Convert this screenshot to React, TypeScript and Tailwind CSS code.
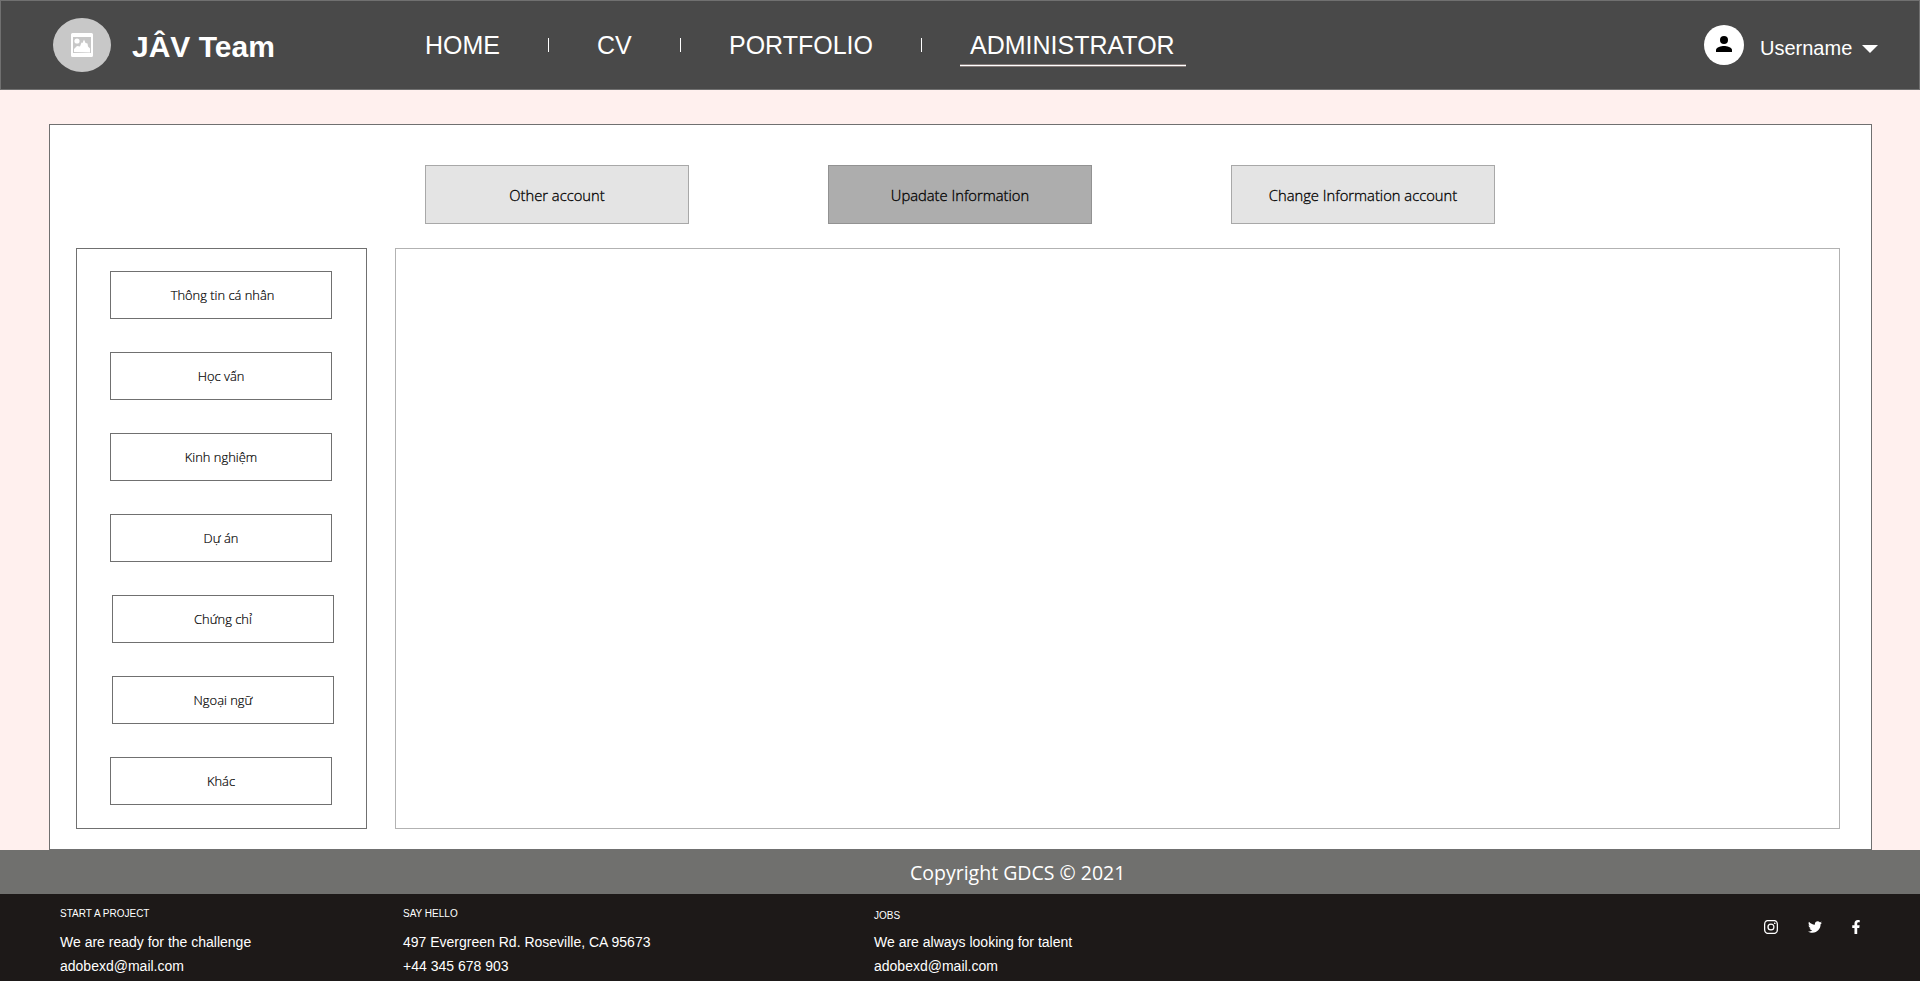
import React from "react";
import { BsInstagram } from "react-icons/bs";
import { FaTwitter, FaFacebookF } from "react-icons/fa";

const arial = "font-['Liberation_Sans',Arial,sans-serif]";
const segoe = "font-['Open_Sans','Noto_Sans',sans-serif]";

const sections = ["Thông tin cá nhân", "Học vấn", "Kinh nghiệm", "Dự án", "Chứng chỉ", "Ngoại ngữ", "Khác"];

export default function App() {
  return (
    <div className={`flex h-[981px] w-[1920px] flex-col overflow-hidden bg-[#fff0ee] ${arial}`}>
      <header className="flex h-[90px] shrink-0 items-start border border-[#707070] bg-[#494949] text-white">
        <div className="ml-[52px] mt-[17px] flex h-[54px] w-[58px] items-center justify-center rounded-[50%] bg-[#c8c8c8]">
          <svg viewBox="0 0 22 24" className="h-6 w-[22px]">
            <path fillRule="evenodd" fill="#fff" d="M1.500 0h19a1.500 1.500 0 0 1 1.500 1.500v21a1.500 1.500 0 0 1-1.500 1.500h-19a1.500 1.500 0 0 1-1.500-1.500v-21a1.500 1.500 0 0 1 1.500-1.500zM2 4v16h18V4z" />
            <circle cx="6" cy="8" r="2.600" fill="#fff" />
            <path d="M3 19v-3l3-3 3 .5 1.500-4 1 .5 1.500-3.500 1.500 3.500 2 .5.5 3 2 2v4z" fill="#fff" />
          </svg>
        </div>
        <h1 className="ml-[21px] mt-[23px] w-[147px] text-[30px] leading-[46px] font-bold whitespace-nowrap">JÂV Team</h1>
        <nav className="flex h-[88px] items-start text-[25px] leading-[36px] whitespace-nowrap">
          <a className="ml-[146px] mt-[26px] w-[77px]">HOME</a>
          <i className="ml-[46px] mt-[37px] h-[14px] w-px bg-white" />
          <a className="ml-[48px] mt-[26px] w-[36px]">CV</a>
          <i className="ml-[47px] mt-[37px] h-[14px] w-px bg-white" />
          <a className="ml-[48px] mt-[26px] w-[145px]">PORTFOLIO</a>
          <i className="ml-[47px] mt-[37px] h-[14px] w-px bg-white" />
          <a className="ml-[38px] mt-[26px] h-[39px] w-[226px] border-b border-white pl-[10px] shadow-[0_1px_#877d7b,inset_0_-1px_#877d7b]">ADMINISTRATOR</a>
        </nav>
        <div className="mr-[41px] ml-auto flex items-start">
          <div className="mt-6 flex size-10 items-center justify-center rounded-full bg-white">
            <svg viewBox="0 0 16 16" className="-mt-0.5 size-4"><circle cx="8" cy="4" r="4" /><path d="M0 16v-2c0-2.700 5.300-4 8-4s8 1.300 8 4v2z" /></svg>
          </div>
          <span className="mt-[33px] ml-[16px] w-[93px] text-[20px] leading-7">Username</span>
          <svg viewBox="0 0 16 8" className="mt-[44px] ml-[9px] h-2 w-4"><path d="M0 0h16L8 8z" fill="#fff" /></svg>
        </div>
      </header>
      <main className={`mt-[34px] ml-[49px] flex h-[726px] w-[1823px] shrink-0 flex-col border border-[#707070] bg-white ${segoe}`}>
        <div className="mt-10 ml-[375px] flex h-[59px] shrink-0 gap-[139px] text-[14.750px] font-light text-black [-webkit-text-stroke:0.3px_black]">
          <button className="w-[264px] border border-[#a8a8a8] bg-[#e4e4e4] pt-px">Other account</button>
          <button className="w-[264px] border border-[#929292] bg-[#adadad] pt-px">Upadate Information</button>
          <button className="w-[264px] border border-[#a8a8a8] bg-[#e4e4e4] pt-px">Change Information account</button>
        </div>
        <div className="mt-6 ml-[26px] flex h-[581px] gap-7">
          <aside className="flex w-[291px] flex-col gap-[33px] border border-[#707070] pt-[22px] pl-[33px]">
            {sections.map((s, i) => (
              <button key={s} className={`h-12 w-[222px] shrink-0 border border-[#707070] pt-0.5 text-[12.900px] font-light text-black [-webkit-text-stroke:0.2px_black] ${i === 0 ? "pl-[3px]" : ""} ${i === 4 || i === 5 ? "ml-0.5" : ""}`}>{s}</button>
            ))}
          </aside>
          <section className="w-[1445px] border border-[#b2b2b2]" />
        </div>
      </main>
      <div className={`flex h-11 shrink-0 items-center bg-[#70706e] pt-0.5 pl-[910px] text-[19.500px] text-white ${segoe}`}>Copyright GDCS © 2021</div>
      <footer className="flex h-[87px] shrink-0 bg-[#1d1918] pl-[60px] text-[14px] leading-6 whitespace-nowrap text-white">
        <div className="w-[343px] pt-[13px]">
          <h2 className="h-[23px] text-[10px] leading-[14px]">START A PROJECT</h2>
          <p>We are ready for the challenge</p>
          <p>adobexd@mail.com</p>
        </div>
        <div className="w-[471px] pt-[13px]">
          <h2 className="h-[23px] text-[10px] leading-[14px]">SAY HELLO</h2>
          <p>497 Evergreen Rd. Roseville, CA 95673</p>
          <p>+44 345 678 903</p>
        </div>
        <div className="w-[890px] pt-[15px]">
          <h2 className="h-[21px] text-[10px] leading-[14px]">JOBS</h2>
          <p>We are always looking for talent</p>
          <p>adobexd@mail.com</p>
        </div>
        <div className="mt-[25px] flex h-[15px] items-center">
          <BsInstagram size={14} />
          <FaTwitter size={14} className="ml-[30px]" />
          <FaFacebookF size={14} className="ml-[27px]" />
        </div>
      </footer>
    </div>
  );
}
